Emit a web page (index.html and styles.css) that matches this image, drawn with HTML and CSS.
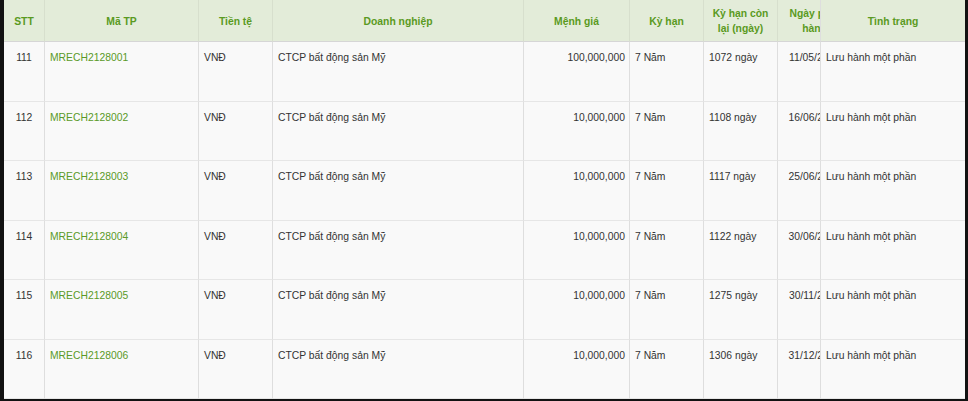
FILE: index.html
```html
<!DOCTYPE html>
<html lang="vi">
<head>
<meta charset="utf-8">
<title>Trái phiếu</title>
<link rel="stylesheet" href="styles.css">
</head>
<body>
<div class="frame">
  <div class="scroller">
    <table class="bonds">
      <thead>
        <tr>
          <th class="c-stt">STT</th>
          <th class="c-code">Mã TP</th>
          <th class="c-cur">Tiền tệ</th>
          <th class="c-org">Doanh nghiệp</th>
          <th class="c-par">Mệnh giá</th>
          <th class="c-term">Kỳ hạn</th>
          <th class="c-left">Kỳ hạn còn lại (ngày)</th>
          <th class="c-date">Ngày phát hành</th>
          <th class="c-status">Tình trạng</th>
        </tr>
      </thead>
      <tbody>
        <tr>
          <td class="c-stt">111</td>
          <td class="c-code"><a href="#">MRECH2128001</a></td>
          <td>VNĐ</td>
          <td>CTCP bất động sản Mỹ</td>
          <td class="num">100,000,000</td>
          <td>7 Năm</td>
          <td>1072 ngày</td>
          <td class="c-date">11/05/2021</td>
          <td class="c-status">Lưu hành một phần</td>
        </tr>
        <tr>
          <td class="c-stt">112</td>
          <td class="c-code"><a href="#">MRECH2128002</a></td>
          <td>VNĐ</td>
          <td>CTCP bất động sản Mỹ</td>
          <td class="num">10,000,000</td>
          <td>7 Năm</td>
          <td>1108 ngày</td>
          <td class="c-date">16/06/2021</td>
          <td class="c-status">Lưu hành một phần</td>
        </tr>
        <tr>
          <td class="c-stt">113</td>
          <td class="c-code"><a href="#">MRECH2128003</a></td>
          <td>VNĐ</td>
          <td>CTCP bất động sản Mỹ</td>
          <td class="num">10,000,000</td>
          <td>7 Năm</td>
          <td>1117 ngày</td>
          <td class="c-date">25/06/2021</td>
          <td class="c-status">Lưu hành một phần</td>
        </tr>
        <tr>
          <td class="c-stt">114</td>
          <td class="c-code"><a href="#">MRECH2128004</a></td>
          <td>VNĐ</td>
          <td>CTCP bất động sản Mỹ</td>
          <td class="num">10,000,000</td>
          <td>7 Năm</td>
          <td>1122 ngày</td>
          <td class="c-date">30/06/2021</td>
          <td class="c-status">Lưu hành một phần</td>
        </tr>
        <tr>
          <td class="c-stt">115</td>
          <td class="c-code"><a href="#">MRECH2128005</a></td>
          <td>VNĐ</td>
          <td>CTCP bất động sản Mỹ</td>
          <td class="num">10,000,000</td>
          <td>7 Năm</td>
          <td>1275 ngày</td>
          <td class="c-date">30/11/2021</td>
          <td class="c-status">Lưu hành một phần</td>
        </tr>
        <tr>
          <td class="c-stt">116</td>
          <td class="c-code"><a href="#">MRECH2128006</a></td>
          <td>VNĐ</td>
          <td>CTCP bất động sản Mỹ</td>
          <td class="num">10,000,000</td>
          <td>7 Năm</td>
          <td>1306 ngày</td>
          <td class="c-date">31/12/2021</td>
          <td class="c-status">Lưu hành một phần</td>
        </tr>
      </tbody>
    </table>
  </div>
</div>
</body>
</html>
```

FILE: styles.css
```css
html, body {
  margin: 0;
  padding: 0;
  background: #121212;
}

.frame {
  width: 968px;
  height: 401px;
  padding: 0 3px 2px 4px;
  box-sizing: border-box;
}

.scroller {
  width: 961px;
  height: 399px;
  overflow: hidden;
  background: #f9f9f9;
}

.bonds {
  table-layout: fixed;
  width: 993px;
  border-collapse: separate;
  border-spacing: 0;
  font-family: "Liberation Sans", Arial, Helvetica, sans-serif;
  font-size: 10.35px;
  line-height: 15px;
  color: #333;
}

.bonds th,
.bonds td {
  box-sizing: border-box;
  border-right: 1px solid #dedede;
  padding: 0 5px;
}

.bonds th {
  height: 42px;
  padding-top: 1px;
  background: #e3ecd9;
  color: #5a9a22;
  font-weight: bold;
  text-align: center;
  vertical-align: middle;
  border-bottom: 1px solid #d6d6d6;
  border-right-color: #d7dfcd;
}

.bonds td {
  height: 59.5px;
  vertical-align: top;
  padding-top: 8px;
  text-align: left;
  background: #f9f9f9;
  border-bottom: 1px solid #e6e6e6;
}

.bonds .c-stt { width: 41px; text-align: center; }
.bonds .c-code { width: 154px; }
.bonds .c-cur { width: 74px; }
.bonds .c-org { width: 251px; }
.bonds .c-par { width: 106px; }
.bonds .c-term { width: 74px; }
.bonds .c-left { width: 74px; }
.bonds .c-date { width: 74px; text-align: center; }

.bonds .c-status {
  width: 145px;
  position: sticky;
  right: 0;
  border-left: 1px solid #dedede;
  border-right: 0;
}

.bonds th.c-status { text-align: center; }
.bonds td.c-status { text-align: left; }

.bonds td.num { text-align: right; padding-right: 4px; }

.bonds a {
  color: #5a9a28;
  text-decoration: none;
}
```
